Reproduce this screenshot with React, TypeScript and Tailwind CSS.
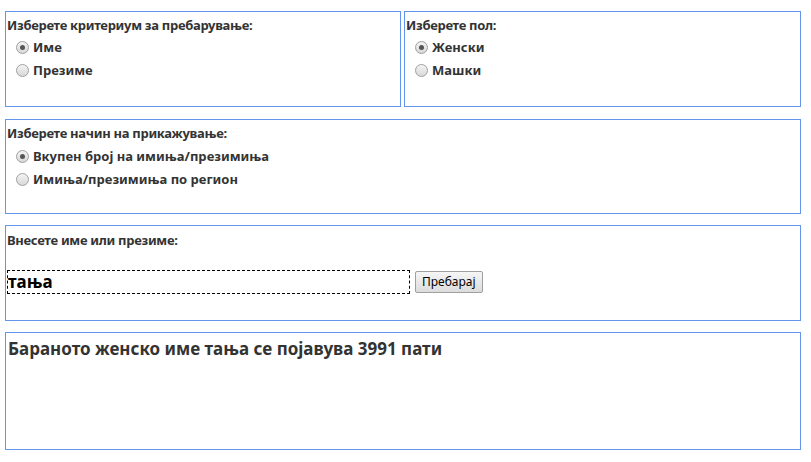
import React from "react";

const Radio = ({ checked, label }: { checked?: boolean; label: string }) => (
  <div className="flex items-center h-[23px] pl-[9px]">
    <span className="w-[13px] h-[13px] rounded-full border border-[#a0a0a0] bg-gradient-to-b from-[#f4f4f4] to-[#d8d8d8] flex items-center justify-center">
      {checked && <span className="w-[5px] h-[5px] rounded-full bg-[#555]" />}
    </span>
    <span className="ml-[4px] text-[13px] font-bold text-[#333] [font-family:'Liberation_Sans',Arial,sans-serif]">{label}</span>
  </div>
);

const H = ({ children }: { children: React.ReactNode }) => (
  <div className="text-[13px] font-bold text-[#333] [font-family:'DejaVu_Sans',Verdana,sans-serif] tracking-[-0.3px] leading-[16px]">{children}</div>
);

export default function App() {
  return (
    <div className="w-[811px] h-[462px] bg-white pt-[11px] pl-[5px]">
      <div className="flex gap-[3px]">
        <div className="w-[396px] h-[96px] border border-[#6495ed] pt-[5px] pl-[1px]">
          <H>Изберете критериум за пребарување:</H>
          <div className="mt-[3px]"><Radio checked label="Име" /><Radio label="Презиме" /></div>
        </div>
        <div className="w-[397px] h-[96px] border border-[#6495ed] pt-[5px] pl-[1px]">
          <H>Изберете пол:</H>
          <div className="mt-[3px]"><Radio checked label="Женски" /><Radio label="Машки" /></div>
        </div>
      </div>
      <div className="mt-[12px] w-[796px] h-[95px] border border-[#6495ed] pt-[5px] pl-[1px]">
        <H>Изберете начин на прикажување:</H>
        <div className="mt-[4px]"><Radio checked label="Вкупен број на имиња/презимиња" /><Radio label="Имиња/презимиња по регион" /></div>
      </div>
      <div className="mt-[11px] w-[796px] h-[96px] border border-[#6495ed] pt-[6px] pl-[1px]">
        <H>Внесете име или презиме:</H>
        <div className="flex items-center mt-[22px]">
          <div className="w-[403px] h-[24px] border border-dashed border-black flex items-center text-[17px] font-bold text-black [font-family:'DejaVu_Sans',Verdana,sans-serif]">тања</div>
          <button className="ml-[5px] h-[22px] px-[6px] border border-[#a0a0a0] rounded-[2px] bg-gradient-to-b from-[#f6f6f6] to-[#dcdcdc] text-[12px] text-black [font-family:'DejaVu_Sans',Verdana,sans-serif]">Пребарај</button>
        </div>
      </div>
      <div className="mt-[11px] w-[796px] h-[118px] border border-[#6495ed] pt-[3px] pl-[2px] text-[17px] font-bold text-[#333] [font-family:'Liberation_Sans',Arial,sans-serif]">
        Бараното женско име тања се појавува 3991 пати
      </div>
    </div>
  );
}
